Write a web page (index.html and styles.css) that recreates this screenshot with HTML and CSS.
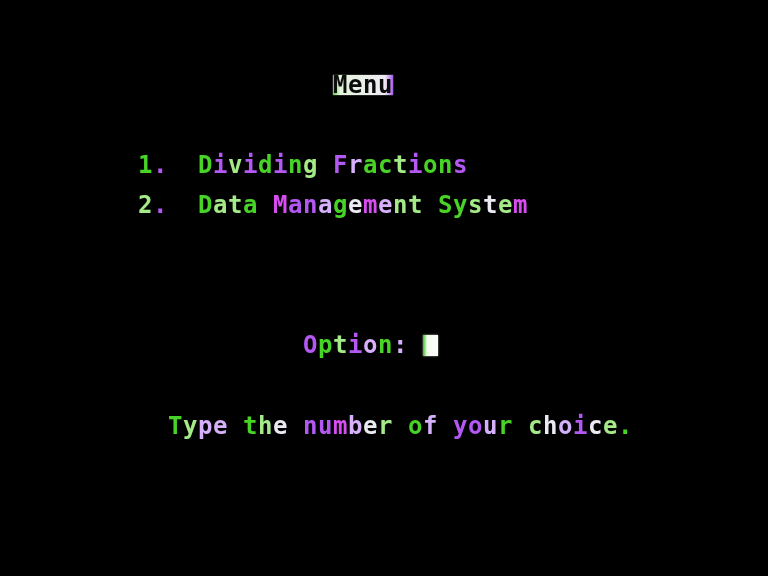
FILE: index.html
```html
<!DOCTYPE html>
<html lang="en">
<head>
<meta charset="utf-8">
<title>Menu</title>
<link rel="stylesheet" href="styles.css">
</head>
<body>
<pre class="screen">             <span class="inv">Menu</span>



<span class="g">1</span><span class="p">.</span>  <span class="g">D</span><span class="p">i</span><span class="gw">v</span><span class="p">i</span><span class="g">d</span><span class="p">i</span><span class="g">n</span><span class="gw">g</span> <span class="p">F</span><span class="pw">r</span><span class="g">a</span><span class="g">c</span><span class="gw">t</span><span class="p">i</span><span class="g">o</span><span class="g">n</span><span class="p">s</span>

<span class="gw">2</span><span class="p">.</span>  <span class="g">D</span><span class="gw">a</span><span class="gw">t</span><span class="g">a</span> <span class="m">M</span><span class="p">a</span><span class="p">n</span><span class="pw">a</span><span class="g">g</span><span class="w">e</span><span class="m">m</span><span class="pw">e</span><span class="gw">n</span><span class="gw">t</span> <span class="g">S</span><span class="g">y</span><span class="gw">s</span><span class="w">t</span><span class="gw">e</span><span class="m">m</span>






           <span class="p">O</span><span class="g">p</span><span class="gw">t</span><span class="p">i</span><span class="pw">o</span><span class="g">n</span><span class="pw">:</span> <span class="cur"> </span>



  <span class="g">T</span><span class="gw">y</span><span class="pw">p</span><span class="pw">e</span> <span class="g">t</span><span class="gw">h</span><span class="w">e</span> <span class="p">n</span><span class="p">u</span><span class="m">m</span><span class="pw">b</span><span class="w">e</span><span class="gw">r</span> <span class="g">o</span><span class="pw">f</span> <span class="p">y</span><span class="p">o</span><span class="pw">u</span><span class="g">r</span> <span class="gw">c</span><span class="w">h</span><span class="pw">o</span><span class="p">i</span><span class="w">c</span><span class="gw">e</span><span class="g">.</span></pre>
</body>
</html>
```
FILE: styles.css
```css
html, body {
  margin: 0;
  padding: 0;
  background: #000;
}

body {
  width: 768px;
  height: 576px;
  overflow: hidden;
}

.screen {
  margin: 0;
  padding: 75px 0 0 138px;
  font-family: "DejaVu Sans Mono", "Liberation Mono", monospace;
  font-weight: bold;
  font-size: 24px;
  line-height: 20px;
  letter-spacing: 0.55px;
  white-space: pre;
  color: #e6e6ee;
  filter: blur(0.45px);
}

.g  { color: #48d426; }
.gw { color: #a4ea88; }
.p  { color: #b458f4; }
.pw { color: #d6b0fa; }
.m  { color: #d84cf2; }
.w  { color: #eceaf2; }

.inv {
  display: inline-block;
  height: 20px;
  vertical-align: top;
  color: #0b0b0b;
  background: linear-gradient(90deg, #5ad834 0, #e6f4dc 7px, #eeeaf4 52px, #a04cf0 61px);
  box-shadow: 0 0 1px #c8c8c8;
}

.cur {
  display: inline-block;
  width: 15px;
  height: 21px;
  vertical-align: top;
  background: linear-gradient(90deg, #3cc01c 0, #f2fcec 4px, #ffffff 100%);
  box-shadow: 0 0 2px rgba(220, 255, 210, 0.7);
}
```
